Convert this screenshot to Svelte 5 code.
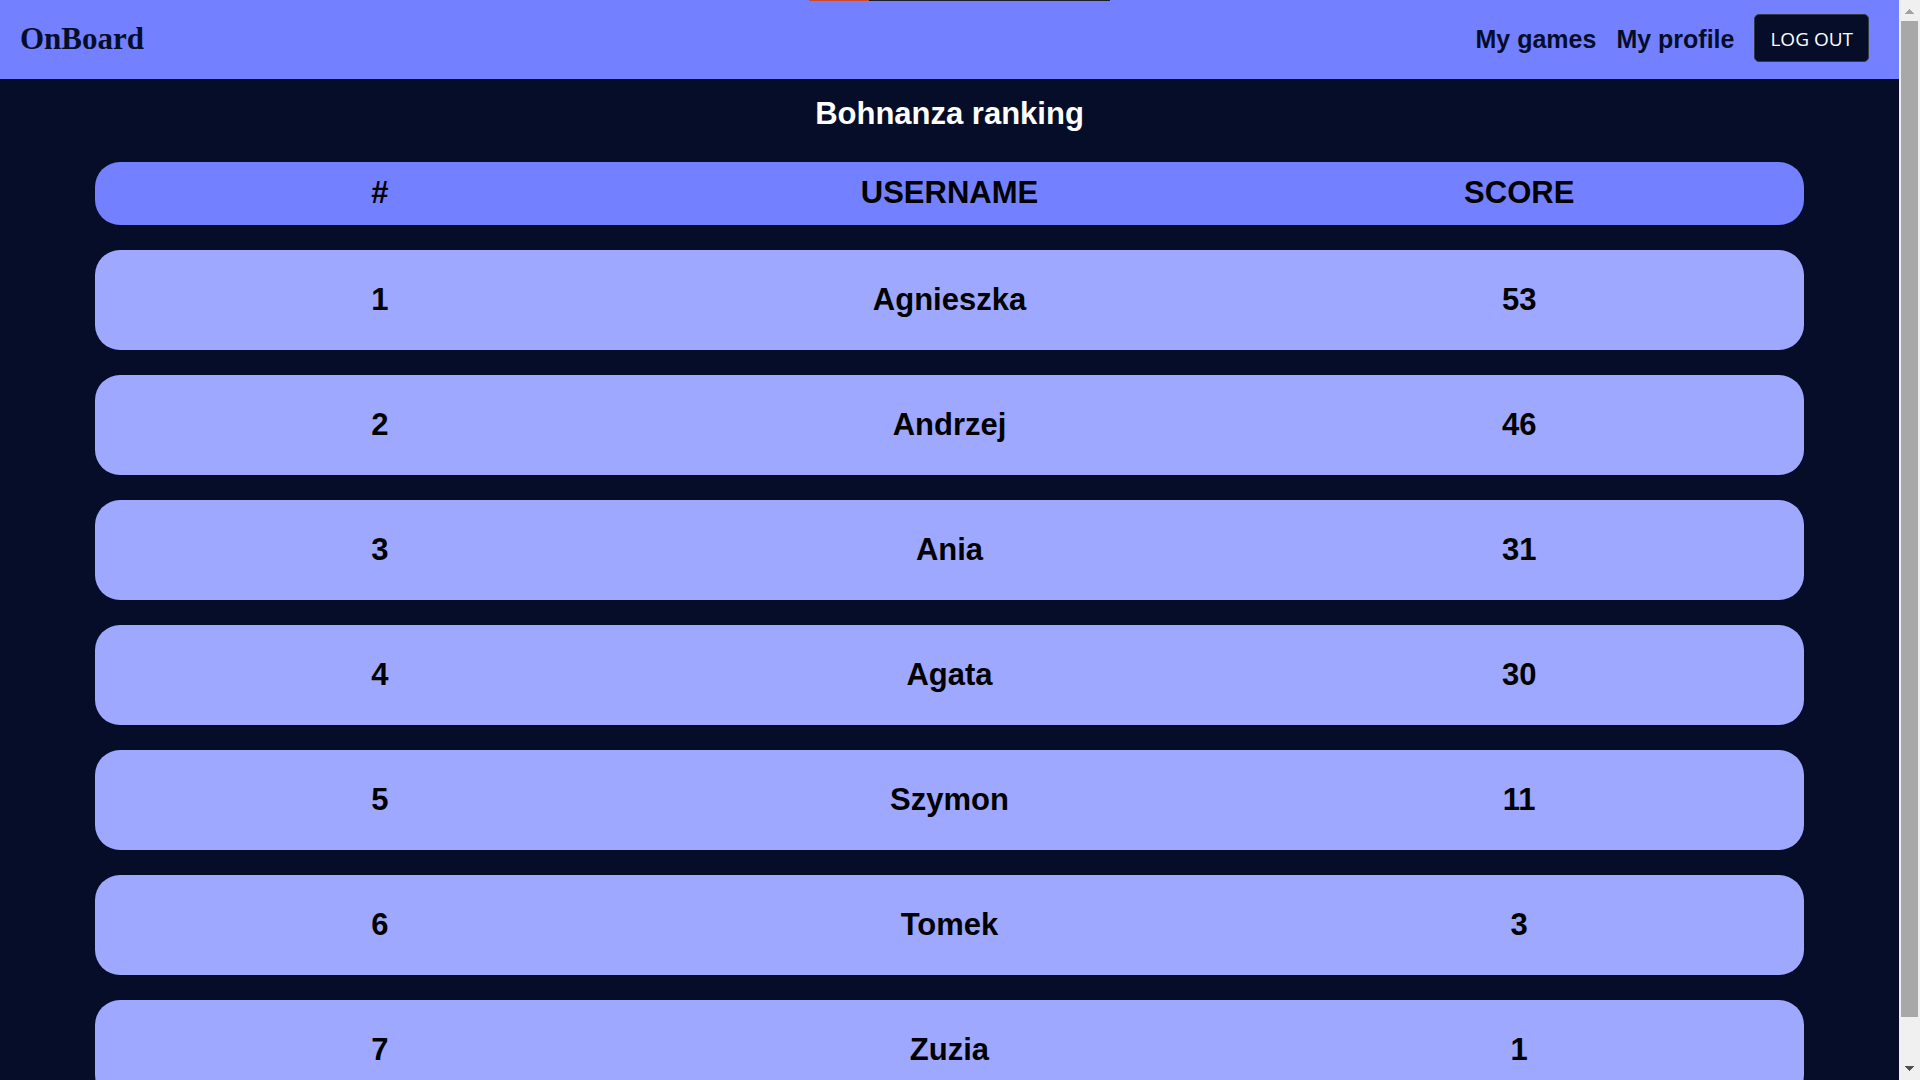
<script>
  const players = [
    { name: 'Agnieszka', score: 53 },
    { name: 'Andrzej', score: 46 },
    { name: 'Ania', score: 31 },
    { name: 'Agata', score: 30 },
    { name: 'Szymon', score: 11 },
    { name: 'Tomek', score: 3 },
    { name: 'Zuzia', score: 1 }
  ];
</script>

<div class="window">
  <div class="page">
    <header class="topbar">
      <a class="brand" href="#home">OnBoard</a>
      <nav class="menu">
        <a href="#games">My games</a>
        <a href="#profile">My profile</a>
        <button type="button">LOG OUT</button>
      </nav>
    </header>

    <main>
      <h1>Bohnanza ranking</h1>
      <table>
        <thead>
          <tr>
            <th scope="col">#</th>
            <th scope="col">USERNAME</th>
            <th scope="col">SCORE</th>
          </tr>
        </thead>
        <tbody>
          {#each players as player, i}
            <tr>
              <td>{i + 1}</td>
              <td>{player.name}</td>
              <td>{player.score}</td>
            </tr>
          {/each}
        </tbody>
      </table>
    </main>
  </div>

  <div class="scrollbar" aria-hidden="true">
    <svg class="arrow up" viewBox="0 0 17 21" shape-rendering="crispEdges">
      <path d="M4 14V13H5V12H6V11H7V10H8V9H9V10H10V11H11V12H12V13H13V14Z" />
    </svg>
    <div class="track"><div class="thumb"></div></div>
    <svg class="arrow down" viewBox="0 0 17 21" shape-rendering="crispEdges">
      <path d="M4 7V8H5V9H6V10H7V11H8V12H9V11H10V10H11V9H12V8H13V7Z" />
    </svg>
  </div>

  <div class="strip" aria-hidden="true"></div>
</div>

<style>
  :global(body) {
    background: #050d29;
  }

  .window {
    position: relative;
    display: flex;
    height: 100vh;
    overflow: hidden;
    font-family: 'Liberation Sans', Arial, sans-serif;
  }

  .page {
    flex: 1;
    min-width: 0;
    overflow-y: auto;
    scrollbar-width: none;
    background: #050d29;
  }

  .topbar {
    display: flex;
    align-items: center;
    justify-content: space-between;
    padding: 14px 30px 17px 20px;
    background: #7380ff;
  }

  .topbar a {
    padding-top: 2px;
    color: #050d29;
    font-weight: 700;
    text-decoration: none;
  }

  .topbar .brand {
    font-family: 'Liberation Serif', 'Times New Roman', serif;
    font-size: 31px;
  }

  .menu {
    display: flex;
    align-items: center;
    gap: 20px;
    font-size: 25px;
  }

  .menu button {
    height: 48px;
    padding: 2px 15px 0;
    border: 1px solid #343a40;
    border-radius: 5px;
    background: #050d29;
    color: #fff;
    font-family: 'Open Sans', 'Segoe UI', sans-serif;
    font-size: 19px;
  }

  h1 {
    margin: 16px 0 0;
    color: #fff;
    font-size: 31px;
    line-height: 38px;
    text-align: center;
  }

  table {
    width: 90%;
    margin: 4px auto 0;
    border-collapse: separate;
    border-spacing: 0 25px;
    table-layout: fixed;
    color: #000;
    font-size: 31px;
    font-weight: 700;
    line-height: 35px;
    text-align: center;
  }

  th {
    height: 63px;
    padding: 0 0 2px;
    box-sizing: border-box;
    background: #7380ff;
  }

  td {
    height: 100px;
    padding: 0 0 2px;
    box-sizing: border-box;
    background: #9fa8ff;
  }

  th:first-child,
  td:first-child {
    border-radius: 25px 0 0 25px;
  }

  th:last-child,
  td:last-child {
    border-radius: 0 25px 25px 0;
  }

  .scrollbar {
    display: flex;
    flex-direction: column;
    width: 17px;
    padding: 0 2px;
    background: #f0f0f0;
  }

  .arrow {
    flex: none;
    width: 17px;
    height: 21px;
  }

  .up {
    fill: #a3a3a3;
  }

  .down {
    fill: #505050;
  }

  .track {
    flex: 1;
  }

  .thumb {
    height: 96%;
    background: #a8a8a8;
  }

  .strip {
    position: absolute;
    top: 0;
    left: 50%;
    width: 301px;
    height: 1px;
    margin-left: -151px;
    background: linear-gradient(to right, #d04a2c 60px, #1e1e28 60px);
  }
</style>
